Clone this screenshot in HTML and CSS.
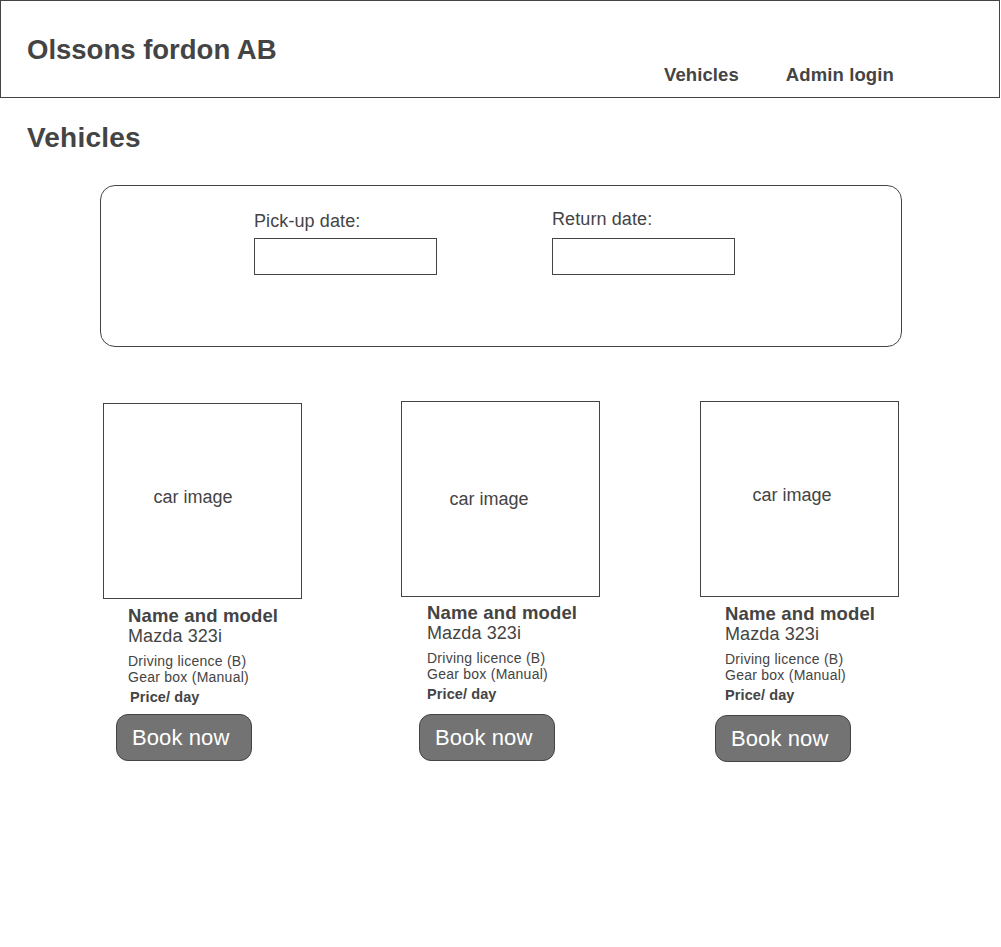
FILE: index.html
```html
<!DOCTYPE html>
<html lang="en">
<head>
<meta charset="utf-8">
<title>Olssons fordon AB</title>
<link rel="stylesheet" href="styles.css">
</head>
<body>
<header class="header">
  <div class="brand">Olssons fordon AB</div>
  <nav class="nav">
    <a class="nav-link" href="#">Vehicles</a>
    <a class="nav-link" href="#">Admin login</a>
  </nav>
</header>

<h1 class="page-title">Vehicles</h1>

<section class="filter">
  <div class="field">
    <label class="field-label">Pick-up date:</label>
    <input class="field-input" type="text">
  </div>
  <div class="field field--return">
    <label class="field-label">Return date:</label>
    <input class="field-input" type="text">
  </div>
</section>

<section class="cards">
  <article class="card card--first">
    <div class="car-image">car image</div>
    <div class="card-info">
      <div class="card-name">Name and model</div>
      <div class="card-model">Mazda 323i</div>
      <div class="card-specs">Driving licence (B)<br>Gear box (Manual)</div>
      <div class="card-price">Price/ day</div>
    </div>
    <button class="book">Book now</button>
  </article>
  <article class="card card--second">
    <div class="car-image">car image</div>
    <div class="card-info">
      <div class="card-name">Name and model</div>
      <div class="card-model">Mazda 323i</div>
      <div class="card-specs">Driving licence (B)<br>Gear box (Manual)</div>
      <div class="card-price">Price/ day</div>
    </div>
    <button class="book">Book now</button>
  </article>
  <article class="card card--third">
    <div class="car-image">car image</div>
    <div class="card-info">
      <div class="card-name">Name and model</div>
      <div class="card-model">Mazda 323i</div>
      <div class="card-specs">Driving licence (B)<br>Gear box (Manual)</div>
      <div class="card-price">Price/ day</div>
    </div>
    <button class="book">Book now</button>
  </article>
</section>
</body>
</html>
```

FILE: styles.css
```css
* {
  box-sizing: border-box;
}

body {
  margin: 0;
  background: #ffffff;
  color: #444444;
  font-family: "Liberation Sans", Arial, sans-serif;
}

/* Header */
.header {
  display: flex;
  width: 1000px;
  height: 98px;
  border: 1px solid #444444;
}

.brand {
  flex: 0 0 663px;
  padding: 33px 0 0 26px;
  font-size: 27.5px;
  line-height: 32px;
  font-weight: bold;
}

.nav {
  display: flex;
  gap: 47px;
  padding-top: 63px;
}

.nav-link {
  color: #444444;
  text-decoration: none;
  font-size: 18.5px;
  line-height: 21px;
  font-weight: bold;
  letter-spacing: 0.1px;
}

/* Page title */
.page-title {
  margin: 24px 0 0 0;
  padding-left: 27px;
  font-size: 28px;
  line-height: 32px;
  font-weight: bold;
  letter-spacing: 0.2px;
}

/* Filter box */
.filter {
  display: flex;
  gap: 115px;
  width: 802px;
  height: 162px;
  margin: 31px 0 0 100px;
  padding: 25px 0 0 153px;
  border: 1px solid #444444;
  border-radius: 15px;
}

.field {
  display: flex;
  flex-direction: column;
  width: 183px;
}

.field-label {
  font-size: 18px;
  line-height: 21px;
  margin-bottom: 6px;
  letter-spacing: 0.1px;
}

.field--return .field-label {
  margin-top: -2px;
  margin-bottom: 8px;
}

.field-input {
  width: 183px;
  height: 37px;
  margin: 0;
  border: 1px solid #444444;
  border-radius: 0;
  background: #ffffff;
  outline: none;
}

/* Cards */
.cards {
  display: grid;
  grid-template-columns: 199px 199px 199px;
  column-gap: 99px;
  align-items: start;
  margin-top: 54px;
  padding-left: 103px;
}

.card {
  display: flex;
  flex-direction: column;
  align-items: flex-start;
}

.card--first {
  margin-top: 2px;
}

.card--third {
  margin-left: 1px;
}

.car-image {
  display: flex;
  align-items: center;
  justify-content: center;
  width: 199px;
  height: 196px;
  padding: 0 19px 8px 0;
  border: 1px solid #444444;
  font-size: 18px;
}

.card--second .car-image {
  padding: 0 23px 0 0;
}

.card--third .car-image {
  padding: 0 15px 8px 0;
}

.card-info {
  margin-top: 6px;
  padding-left: 25px;
}

.card--second .card-info {
  padding-left: 26px;
  margin-top: 5px;
}

.card-name {
  font-size: 18.5px;
  line-height: 21px;
  font-weight: bold;
  letter-spacing: 0.15px;
}

.card-model {
  font-size: 18px;
  line-height: 21px;
  letter-spacing: 0.1px;
}

.card-specs {
  margin-top: 6px;
  font-size: 14px;
  line-height: 16px;
  letter-spacing: 0.25px;
}

.card-price {
  margin-top: 4px;
  font-size: 14.5px;
  line-height: 17px;
  font-weight: bold;
  letter-spacing: 0.1px;
}

.card--first .card-price {
  padding-left: 2px;
}

.book {
  width: 136px;
  height: 47px;
  margin: 10px 0 0 15px;
  padding: 0 0 0 15px;
  border: 1px solid #444444;
  border-radius: 12px;
  background: #737373;
  color: #ffffff;
  font-family: "Liberation Sans", Arial, sans-serif;
  font-size: 22px;
  line-height: 45px;
  text-align: left;
  letter-spacing: 0.1px;
  cursor: pointer;
}

.card--first .book {
  margin-top: 8px;
  margin-left: 13px;
}

.card--second .book {
  margin-left: 18px;
  margin-top: 11px;
}

.card--third .book {
  margin-top: 11px;
}
```
